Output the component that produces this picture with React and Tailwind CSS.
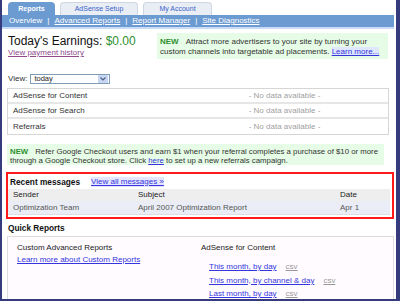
import React from 'react';

const Link = ({ children, className = '' }) => (
  <a href="#" className={`text-[#3535dd] underline ${className}`}>{children}</a>
);

const Tab = ({ label, active }) => (
  <div
    className={
      active
        ? 'h-[13px] w-[47px] rounded-t-[4px] bg-[#6c9bd2] text-white font-bold flex items-center justify-center'
        : 'h-[13px] rounded-t-[4px] bg-[#e9eef5] border border-b-0 border-[#cdd6e2] text-[#3a5fc8] flex items-center justify-center'
    }
  >
    {label}
  </div>
);

const DataRow = ({ label, last }) => (
  <div className={`flex h-[15px] items-center ${last ? '' : 'border-b-2 border-[#e6e6e6]'}`}>
    <div className="w-[173px] pl-[5px] text-[#333]">{label}</div>
    <div className="flex-1 text-center text-[#a0a0a0]">- No data available -</div>
  </div>
);

export default function App() {
  return (
    <div
      className="w-[400px] h-[301px] overflow-hidden bg-[#353b7c] pl-[2px] pr-[4px] pb-[2px] text-[8px] leading-[10px] text-[#333]"
      style={{ fontFamily: '"Liberation Sans", Arial, sans-serif' }}
    >
      <div className="h-full bg-white overflow-hidden">
        {/* Tabs */}
        <div className="flex gap-[5px] pl-[6px] pt-[2px] text-[7px]">
          <Tab label="Reports" active />
          <div className="w-[78px]"><Tab label="AdSense Setup" /></div>
          <div className="w-[69px]"><Tab label="My Account" /></div>
        </div>

        {/* Sub nav */}
        <div className="mr-[2px] h-[12px] bg-[#6c9bd2] flex items-center pl-[7px] text-white">
          <span>Overview</span>
          <span className="mx-[5px]">|</span>
          <a href="#" className="underline">Advanced Reports</a>
          <span className="mx-[5px]">|</span>
          <a href="#" className="underline">Report Manager</a>
          <span className="mx-[5px]">|</span>
          <a href="#" className="underline">Site Diagnostics</a>
        </div>
        <div className="mr-[2px] h-[2px] bg-[#c8dcf8]" />

        <div className="pl-[4px] pr-[2px] pt-[4px]">
          {/* Earnings + promo */}
          <div className="flex justify-between">
            <div className="pl-[2px] pt-[1px]">
              <div className="text-[12px] leading-[14px] text-[#111]">
                Today's Earnings: <span className="text-[#2f8f2f]">$0.00</span>
              </div>
              <a href="#" className="text-[#8e4b8e] underline">View payment history</a>
            </div>
            <div className="w-[231px] h-[26px] mr-[6px] bg-[#e6fce6] pl-[3px] pt-[4px] leading-[9.5px] text-[#333] whitespace-nowrap">
              <span className="font-bold text-[#2f8f2f] mr-[7px]">NEW</span>
              Attract more advertisers to your site by turning your
              <br />
              custom channels into targetable ad placements.{' '}
              <Link className="bg-[#dfe6ff]">Learn more...</Link>
            </div>
          </div>

          {/* View select */}
          <div className="mt-[15px] flex items-center pl-[2px] h-[10px]">
            <span className="text-[#333] mr-[3px]">View:</span>
            <div className="w-[80px] h-[10px] border border-[#7f9db9] bg-white flex items-center justify-between pl-[3px] text-[7.5px] leading-[8px] text-[#222]">
              <span>today</span>
              <span className="w-[10px] h-[8px] mr-[1px] bg-[#c7d7f3] flex items-center justify-center">
                <svg width="6" height="4" viewBox="0 0 6 4"><path d="M0.5 0.5 L3 3 L5.5 0.5" fill="none" stroke="#4d6185" strokeWidth="1.2" /></svg>
              </span>
            </div>
          </div>

          {/* Data table */}
          <div className="mt-[4px] ml-[1px] w-[382px] border border-[#d6d6d6]">
            <DataRow label="AdSense for Content" />
            <DataRow label="AdSense for Search" />
            <DataRow label="Referrals" last />
          </div>

          {/* Referral promo */}
          <div className="mt-[9px] ml-[1px] w-[377px] h-[21px] bg-[#e6fce6] pl-[3px] pt-[3px] leading-[9px] text-[#333] text-[7.8px] whitespace-nowrap overflow-hidden">
            <span className="font-bold text-[#2f8f2f] mr-[7px]">NEW</span>
            Refer Google Checkout users and earn $1 when your referral completes a purchase of $10 or more
            <br />
            through a Google Checkout store. Click <Link>here</Link> to set up a new referrals campaign.
          </div>

          {/* Recent messages */}
          <div className="mt-[7px] border-2 border-[#ff1a1a] pb-[2px]">
            <div className="h-[15px] flex items-center pl-[2px]">
              <span className="font-bold text-[8.3px] text-[#111]">Recent messages</span>
              <Link className="ml-[11px] bg-[#e4e6ff]">View all messages »</Link>
            </div>
            <div className="mr-[2px] h-[12px] bg-[#eeeeee] flex items-center text-[#222]">
              <div className="w-[130px] pl-[5px]">Sender</div>
              <div className="w-[202px]">Subject</div>
              <div>Date</div>
            </div>
            <div className="mr-[2px] h-[14px] bg-[#eaedf6] border-b border-[#dcdfe8] flex items-center text-[#555]">
              <div className="w-[130px] pl-[5px]">Optimization Team</div>
              <div className="w-[202px]">April 2007 Optimization Report</div>
              <div>Apr 1</div>
            </div>
          </div>

          {/* Quick reports */}
          <div className="mt-[4px] pl-[2px] font-bold text-[8.3px] text-[#111]">Quick Reports</div>
          <div className="mt-[3px] ml-[1px] h-[80px] border border-[#dddddd] bg-[#fffbff] pl-[9px] pt-[6px] grid grid-cols-[184px_1fr]">
            <div>
              <div className="text-[#222]">Custom Advanced Reports</div>
              <Link className="block mt-[2px]">Learn more about Custom Reports</Link>
            </div>
            <div>
              <div className="text-[#222]">AdSense for Content</div>
              <div className="mt-[9px] pl-[8px] flex flex-col gap-[3.5px]">
                <div><Link>This month, by day</Link><a href="#" className="ml-[9px] text-[#999] underline">csv</a></div>
                <div><Link>This month, by channel &amp; day</Link><a href="#" className="ml-[9px] text-[#999] underline">csv</a></div>
                <div><Link>Last month, by day</Link><a href="#" className="ml-[9px] text-[#999] underline">csv</a></div>
              </div>
            </div>
          </div>
        </div>
      </div>
    </div>
  );
}
